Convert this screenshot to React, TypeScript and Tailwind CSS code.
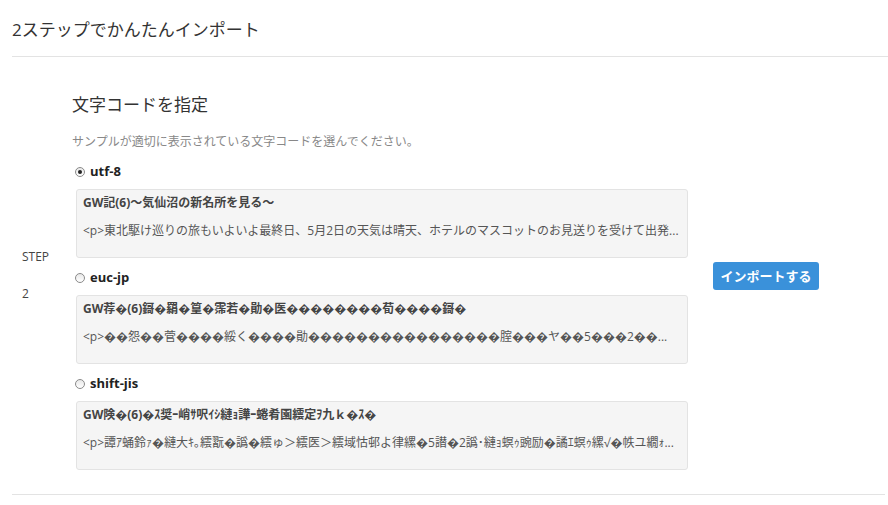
const encodings = [
  {
    name: 'utf-8',
    checked: true,
    title: 'GW記(6)～気仙沼の新名所を見る～',
    body: '<p>東北駆け巡りの旅もいよいよ最終日、5月2日の天気は晴天、ホテルのマスコットのお見送りを受けて出発...'
  },
  {
    name: 'euc-jp',
    checked: false,
    title: 'GW荐�(6)鎶�羂�篁�霈若�勛�医��������荀����鎶�',
    body: '<p>��怨��菅����綏く����勛����������������腟���ヤ��5���2��...'
  },
  {
    name: 'shift-jis',
    checked: false,
    title: 'GW険�(6)�ｽ奨ｰ峭ｻ呎ｲｼ縺ｮ譁ｰ蜷肴園繧定ｦ九ｋ�ｽ�',
    body: '<p>譚ｱ蛹鈴ｧ�縺大ｷ｡繧翫�譌�繧ゅ＞繧医＞繧域怙邨よ律縲�5譛�2譌･縺ｮ螟ｩ豌励�譎ｴ螟ｩ縲√�帙ユ繝ｫ...'
  }
]

const Radio = ({ checked }: { checked: boolean }) => (
  <span className="relative inline-flex items-center justify-center w-[10px] h-[10px] rounded-full border border-[#8a8a8a] bg-gradient-to-b from-[#e8e8e8] to-white">
    {checked && <span className="w-[4px] h-[4px] rounded-full bg-[#222]" />}
  </span>
)

const App = () => {
  return (
    <div
      className="w-[888px] h-[505px] bg-white pl-[12px] text-[#333]"
      style={{ fontFamily: '"Open Sans", "Noto Sans CJK JP", "DejaVu Sans", sans-serif' }}
    >
      <h1 className="pt-[18px] h-[56px] text-[17px] leading-[24px] font-normal text-[#333]">
        2ステップでかんたんインポート
      </h1>
      <div className="border-t border-[#e3e3e3]" />

      <div className="flex items-center h-[438px] border-b border-[#e3e3e3] mr-[3px]">
        <div className="w-[60px] pl-[10px] text-[12px] leading-[18px] text-[#444]">
          <p className="mb-[19px]">STEP</p>
          <p>2</p>
        </div>

        <div className="w-[616px] self-start pt-[36px]">
          <h2 className="text-[17px] leading-[24px] font-normal text-[#333]">文字コードを指定</h2>
          <p className="mt-[16px] text-[12px] leading-[18px] text-[#888]">
            サンプルが適切に表示されている文字コードを選んでください。
          </p>
          <div className="mt-[12px]">
            {encodings.map((enc, i) => (
              <div key={enc.name} className={i > 0 ? 'mt-[11px]' : ''}>
                <label className="flex items-center h-[18px] pl-[3px] gap-[5px]">
                  <Radio checked={enc.checked} />
                  <span className="text-[13px] font-bold text-[#222]">{enc.name}</span>
                </label>
                <div className="mt-[8px] ml-[4px] w-[612px] h-[69px] bg-[#f5f5f5] border border-[#e3e3e3] rounded-[3px] px-[6px] pt-[4px] text-[12px] leading-[18px] overflow-hidden">
                  <p className="font-bold text-[#444] whitespace-nowrap">{enc.title}</p>
                  <p className="mt-[10px] text-[#555] whitespace-nowrap">{enc.body}</p>
                </div>
              </div>
            ))}
          </div>
        </div>

        <div className="pl-[25px]">
          <button
            type="button"
            className="w-[106px] h-[28px] rounded-[3px] bg-[#3a91da] text-white text-[13px] font-bold leading-[28px]"
          >
            インポートする
          </button>
        </div>
      </div>
    </div>
  )
}

export default App
